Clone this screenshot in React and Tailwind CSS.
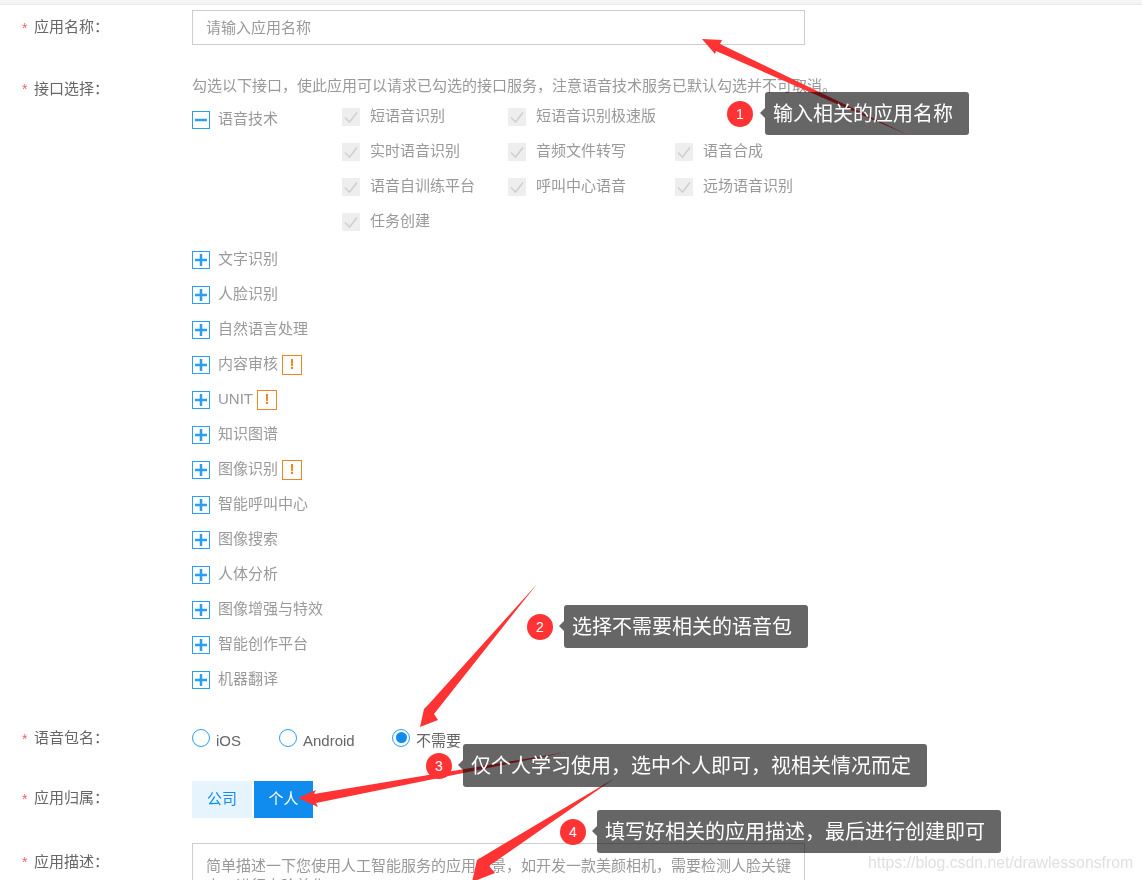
import React from 'react'

const FONT = "font-['Liberation_Sans','Noto_Sans_CJK_SC',sans-serif]"

const speechApis = [
  '短语音识别', '短语音识别极速版', null,
  '实时语音识别', '音频文件转写', '语音合成',
  '语音自训练平台', '呼叫中心语音', '远场语音识别',
  '任务创建',
]

const otherApis = [
  { name: '文字识别' },
  { name: '人脸识别' },
  { name: '自然语言处理' },
  { name: '内容审核', warn: true },
  { name: 'UNIT', warn: true },
  { name: '知识图谱' },
  { name: '图像识别', warn: true },
  { name: '智能呼叫中心' },
  { name: '图像搜索' },
  { name: '人体分析' },
  { name: '图像增强与特效' },
  { name: '智能创作平台' },
  { name: '机器翻译' },
]

const notes = [
  { n: 1, text: '输入相关的应用名称', pos: 'left-[727px] top-[92px]', gap: 'mr-[12px]' },
  { n: 2, text: '选择不需要相关的语音包', pos: 'left-[527px] top-[605px]', gap: 'mr-[11px]' },
  { n: 3, text: '仅个人学习使用，选中个人即可，视相关情况而定', pos: 'left-[426px] top-[744px]', gap: 'mr-[11px]' },
  { n: 4, text: '填写好相关的应用描述，最后进行创建即可', pos: 'left-[560px] top-[810px]', gap: 'mr-[11px]' },
]

const FieldLabel = ({ children, className = '' }) => (
  <div className={`w-[170px] shrink-0 pl-[22px] flex items-center text-[15px] text-[#666] ${className}`}>
    <span className="w-[12px] text-[#f0616d] text-sm">*</span>
    <span>{children}：</span>
  </div>
)

const TreeToggle = ({ open }) => (
  <svg width="18" height="18" viewBox="0 0 18 18" className="shrink-0">
    <rect x="0.5" y="0.5" width="17" height="17" fill="#fff" stroke="#2a9df4" />
    <rect x="3" y="7.75" width="12" height="2.5" fill="#2a9df4" />
    {!open && <rect x="7.75" y="3" width="2.5" height="12" fill="#2a9df4" />}
  </svg>
)

const DisabledCheck = ({ label }) => (
  <div className="flex items-center h-[35px] text-[15px] text-[#999]">
    <span className="w-[18px] h-[18px] bg-[#eee] flex items-center justify-center mr-[10px]">
      <svg width="14" height="14" viewBox="0 0 14 14">
        <path d="M1 7.5 L5.5 12 L13 2.5" fill="none" stroke="#cfcfcf" strokeWidth="1.5" />
      </svg>
    </span>
    {label}
  </div>
)

const Radio = ({ label, checked, className = '' }) => (
  <div className={`flex items-center text-[15px] text-[#666] ${className}`}>
    <span className="w-[18px] h-[18px] rounded-full border border-[#2a9df4] flex items-center justify-center mr-[6px] -mt-[2px] bg-white">
      {checked && <span className="w-[11px] h-[11px] rounded-full bg-[#108cee]" />}
    </span>
    <span className="translate-y-[3px]">{label}</span>
  </div>
)

const Annotation = ({ n, text, pos, gap }) => (
  <div className={`absolute flex items-center h-[43px] ${pos}`}>
    <span className={`w-[26px] h-[26px] rounded-full bg-[#ff3333] text-white text-sm flex items-center justify-center ${gap}`}>
      {n}
    </span>
    <div className="relative h-full flex items-center px-[8px] pr-[16px]">
      <div className="absolute inset-0 rounded-[3px] bg-[#666] mix-blend-multiply" />
      <div className="absolute -left-[5px] top-[16px] w-0 h-0 border-y-[5px] border-y-transparent border-r-[5px] border-r-[#666]" />
      <span className="relative text-xl text-white whitespace-nowrap">{text}</span>
    </div>
  </div>
)

const Arrows = () => (
  <svg width="1142" height="880" viewBox="0 0 1142 880" className="absolute left-0 top-0">
    <g fill="#ff3333">
      <polygon points="702,39 722,40 720,44 908,135 716,51 715,54" />
      <polygon points="420,727 438,720 434,714 537,584 428,705 424,709" />
      <polygon points="298,798 316,790 314,794 567,752 316,803 318,807" />
      <polygon points="472,882 495,873 489,866 615,778 482,857 477,860" />
    </g>
  </svg>
)

const App = () => {
  return (
    <div className={`relative w-[1142px] h-[880px] overflow-hidden bg-white ${FONT}`}>
      <div className="h-[5px] bg-[#f5f5f7] border-b border-[#e8e8ee]" />

      {/* App name */}
      <div className="flex pt-[5px]">
        <FieldLabel className="h-[35px]">应用名称</FieldLabel>
        <input
          readOnly
          placeholder="请输入应用名称"
          className="ml-[22px] w-[613px] h-[35px] border border-[#ccc] px-[13px] text-[15px] outline-none placeholder:text-[#999]"
        />
      </div>

      {/* Api selection */}
      <div className="flex mt-[30px]">
        <FieldLabel className="h-[20px] mt-[4px]">接口选择</FieldLabel>
        <div className="ml-[22px] flex-1">
          <div className="h-[20px] text-[15px] text-[#999] whitespace-nowrap">
            勾选以下接口，使此应用可以请求已勾选的接口服务，注意语音技术服务已默认勾选并不可取消。
          </div>
          <div className="flex mt-[4px]">
            <div className="w-[150px] h-[35px] flex items-center text-[15px] text-[#999] pt-[6px]">
              <TreeToggle open />
              <span className="ml-[8px]">语音技术</span>
            </div>
            <div className="grid grid-cols-[166px_167px_auto]">
              {speechApis.map((api, i) =>
                api ? <DisabledCheck key={i} label={api} /> : <div key={i} />
              )}
            </div>
          </div>
          <div className="mt-[3px]">
            {otherApis.map(api => (
              <div key={api.name} className="flex items-center h-[35px] text-[15px] text-[#999]">
                <TreeToggle />
                <span className="ml-[8px]">{api.name}</span>
                {api.warn && (
                  <span className="ml-[4px] w-[20px] h-[20px] border border-[#f0851e] text-[#f0851e] font-bold flex items-center justify-center">
                    !
                  </span>
                )}
              </div>
            ))}
          </div>
        </div>
      </div>

      {/* Voice package */}
      <div className="flex items-center h-[35px] mt-[24px]">
        <FieldLabel>语音包名</FieldLabel>
        <div className="ml-[22px] flex">
          <Radio label="iOS" className="w-[87px]" />
          <Radio label="Android" className="w-[113px]" />
          <Radio label="不需要" checked />
        </div>
      </div>

      {/* Ownership */}
      <div className="flex items-center mt-[25px]">
        <FieldLabel className="-mt-[2px]">应用归属</FieldLabel>
        <div className="ml-[22px] flex gap-[2px] text-[15px]">
          <div className="w-[60px] h-[37px] bg-[#e6f4fe] text-[#108cee] flex items-center justify-center">公司</div>
          <div className="w-[59px] h-[37px] bg-[#108cee] text-white flex items-center justify-center">个人</div>
        </div>
      </div>

      {/* Description */}
      <div className="flex mt-[25px]">
        <FieldLabel className="h-[20px] mt-[9px]">应用描述</FieldLabel>
        <textarea
          readOnly
          placeholder="简单描述一下您使用人工智能服务的应用场景，如开发一款美颜相机，需要检测人脸关键点，进行人脸美化"
          className="ml-[22px] w-[613px] h-[100px] border border-[#ccc] px-[13px] py-[12px] text-[15px] leading-[20px] outline-none resize-none placeholder:text-[#999]"
        />
      </div>

      <Arrows />
      {notes.map(note => (
        <Annotation key={note.n} {...note} />
      ))}

      <div className="absolute left-[868px] top-[851px] text-[15.8px] text-[#e0e0e0] whitespace-nowrap">
        https://blog.csdn.net/drawlessonsfrom
      </div>
    </div>
  )
}

export default App
